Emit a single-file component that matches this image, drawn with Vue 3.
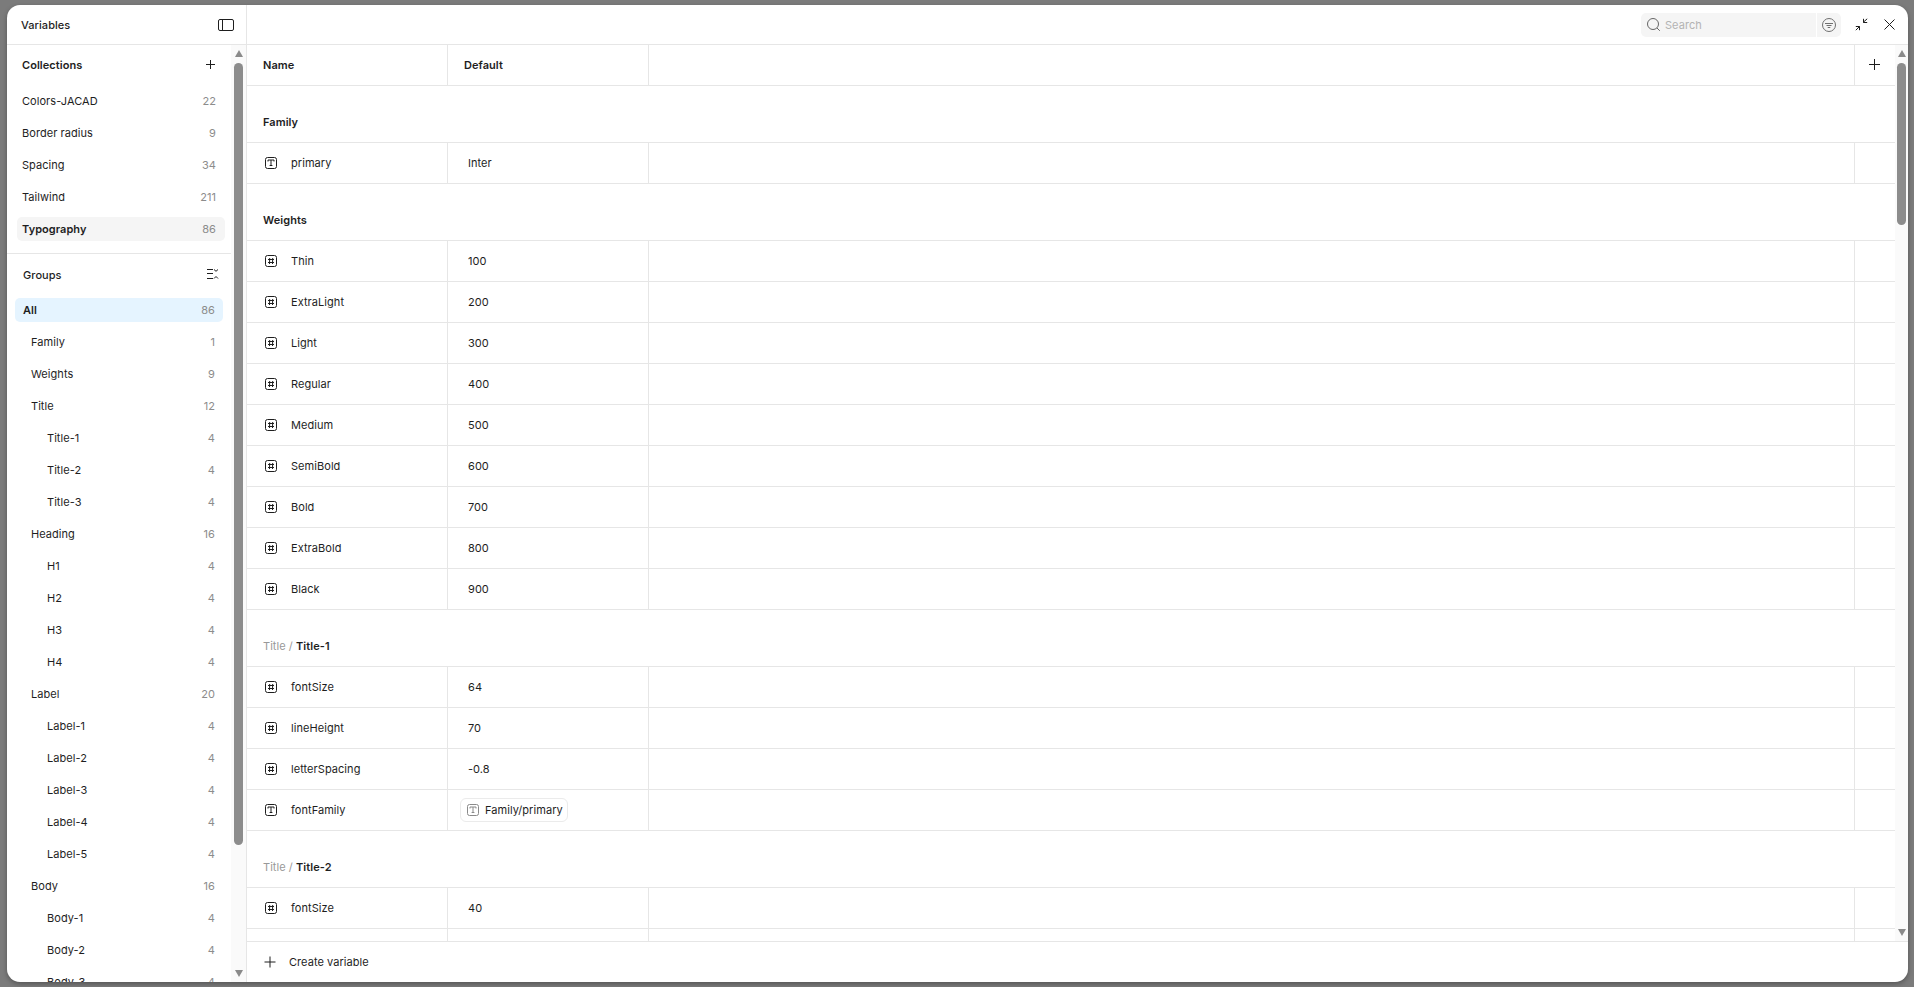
<script setup>
const collections = [
  { name: 'Colors-JACAD', count: 22 },
  { name: 'Border radius', count: 9 },
  { name: 'Spacing', count: 34 },
  { name: 'Tailwind', count: 211 },
  { name: 'Typography', count: 86, active: true },
]
const groups = [
  ['Family', 1, 1], ['Weights', 9, 1], ['Title', 12, 1],
  ['Title-1', 4, 2], ['Title-2', 4, 2], ['Title-3', 4, 2],
  ['Heading', 16, 1], ['H1', 4, 2], ['H2', 4, 2], ['H3', 4, 2], ['H4', 4, 2],
  ['Label', 20, 1], ['Label-1', 4, 2], ['Label-2', 4, 2], ['Label-3', 4, 2], ['Label-4', 4, 2], ['Label-5', 4, 2],
  ['Body', 16, 1], ['Body-1', 4, 2], ['Body-2', 4, 2], ['Body-3', 4, 2],
].map(([name, count, level]) => ({ name, count, level }))
const sections = [
  { title: 'Family', rows: [{ t: 'T', name: 'primary', value: 'Inter' }] },
  {
    title: 'Weights',
    rows: [['Thin', 100], ['ExtraLight', 200], ['Light', 300], ['Regular', 400], ['Medium', 500], ['SemiBold', 600], ['Bold', 700], ['ExtraBold', 800], ['Black', 900]]
      .map(([name, value]) => ({ t: '#', name, value })),
  },
  {
    parent: 'Title', title: 'Title-1',
    rows: [
      { t: '#', name: 'fontSize', value: '64' },
      { t: '#', name: 'lineHeight', value: '70' },
      { t: '#', name: 'letterSpacing', value: '-0.8' },
      { t: 'T', name: 'fontFamily', alias: 'Family/primary' },
    ],
  },
  {
    parent: 'Title', title: 'Title-2',
    rows: [
      { t: '#', name: 'fontSize', value: '40' },
      { t: '#', name: 'lineHeight', value: '48' },
    ],
  },
]
</script>

<template>
  <div class="page">
    <div class="modal">
      <aside class="side">
        <header class="side-head">
          <span class="title">Variables</span>
          <svg class="ic" width="16" height="12" viewBox="0 0 16 12" fill="none" stroke="#1e1e1e">
            <rect x="0.5" y="0.5" width="15" height="11" rx="1.5" />
            <path d="M4.5 0.5v11" />
          </svg>
        </header>
        <div class="side-body">
          <div class="side-scroll">
            <div class="coll-head">
              <span class="strong">Collections</span>
              <svg width="12" height="12" viewBox="0 0 12 12" fill="none" stroke="#1e1e1e"><path d="M6.5 1v9M2 5.5h9" /></svg>
            </div>
            <ul class="coll-list">
              <li v-for="c in collections" :key="c.name" class="coll" :class="{ active: c.active }">
                <span>{{ c.name }}</span><span class="count">{{ c.count }}</span>
              </li>
            </ul>
            <div class="groups-head">
              <span class="medium">Groups</span>
              <svg width="12" height="11" viewBox="0 0 12 11" fill="none" stroke="#1e1e1e">
                <path d="M0 0.5h6M0 4.5h6M0 9.5h6M7 0.5l2 1.8 2-1.8M7 9.5l2-2 2 2" />
              </svg>
            </div>
            <ul class="group-list">
              <li class="group all"><span>All</span><span class="count">86</span></li>
              <li v-for="g in groups" :key="g.name" class="group" :class="'lv' + g.level">
                <span>{{ g.name }}</span><span class="count">{{ g.count }}</span>
              </li>
            </ul>
          </div>
          <div class="bar bar-side">
            <i class="arrow up"></i>
            <i class="thumb thumb-side"></i>
            <i class="arrow down"></i>
          </div>
        </div>
      </aside>

      <main class="main">
        <header class="top">
          <div class="search">
            <div class="search-input">
              <svg width="14" height="14" viewBox="0 0 14 14" fill="none" stroke="#666"><circle cx="6" cy="6" r="5.5" /><path d="M10 10L12.8 12.8" /></svg>
              <span>Search</span>
            </div>
            <div class="search-filter">
              <svg width="14" height="14" viewBox="0 0 14 14" fill="none" stroke="#707070"><circle cx="7" cy="7" r="6.5" /><path d="M3 5.5h8M4.5 7.5h5M5.7 9.5h2.6" /></svg>
            </div>
          </div>
          <button class="icon-btn">
            <svg width="13" height="13" viewBox="0 0 13 13" fill="none" stroke="#1e1e1e"><path d="M12.2 0.8L8 4.5M8.5 0.8v3.7h3.7M0.8 12.2L4.5 8.5M0.8 8.5h3.7v3.7" /></svg>
          </button>
          <button class="icon-btn close">
            <svg width="11" height="11" viewBox="0 0 11 11" fill="none" stroke="#1e1e1e"><path d="M0.5 0.5l10 10M10.5 0.5l-10 10" /></svg>
          </button>
        </header>

        <div class="table-wrap">
          <div class="table">
            <div class="row head">
              <div class="cell name-h">Name</div>
              <div class="cell def-h">Default</div>
              <div class="cell"></div>
              <div class="cell add">
                <svg width="12" height="12" viewBox="0 0 12 12" fill="none" stroke="#1e1e1e"><path d="M5.5 0v11M0 5.5h11" /></svg>
              </div>
            </div>
            <section v-for="s in sections" :key="s.title">
              <div class="sec-title">
                <span v-if="s.parent" class="crumb">{{ s.parent }} / </span><b>{{ s.title }}</b>
              </div>
              <div v-for="r in s.rows" :key="r.name" class="row">
                <div class="cell name">
                  <svg class="type" width="12" height="12" viewBox="0 0 12 12" fill="none" stroke="#1e1e1e">
                    <rect x="0.5" y="0.5" width="11" height="11" rx="2" />
                    <path v-if="r.t === 'T'" d="M3 4.5V3h6v1.5M6 3v6M4.6 8.5h2.8" />
                    <path v-else d="M4.7 3l-.2 6M7.7 3l-.2 6M3 4.5h6M3 7.5h6" />
                  </svg>
                  <span>{{ r.name }}</span>
                </div>
                <div class="cell val">
                  <span v-if="r.alias" class="pill">
                    <svg width="12" height="12" viewBox="0 0 12 12" fill="none" stroke="#8a8a8a">
                      <rect x="0.5" y="0.5" width="11" height="11" rx="2" />
                      <path d="M3 4.5V3h6v1.5M6 3v6M4.6 8.5h2.8" />
                    </svg>
                    {{ r.alias }}
                  </span>
                  <template v-else>{{ r.value }}</template>
                </div>
                <div class="cell"></div>
                <div class="cell"></div>
              </div>
            </section>
          </div>
          <div class="bar bar-main">
            <i class="arrow up"></i>
            <i class="thumb thumb-main"></i>
            <i class="arrow down"></i>
          </div>
        </div>

        <footer class="foot">
          <svg width="12" height="12" viewBox="0 0 12 12" fill="none" stroke="#1e1e1e"><path d="M6 0.5v11M0.5 6h11" /></svg>
          <span>Create variable</span>
        </footer>
      </main>
    </div>
  </div>
</template>

<style>
html, body { margin: 0; background: #7b7b7b; overflow: hidden; }
</style>

<style scoped>
.page {
  width: 1914px;
  height: 987px;
  box-sizing: border-box;
  padding: 5px 6px 5px 7px;
  overflow: hidden;
  font-family: Inter, "Liberation Sans", sans-serif;
  font-size: 11px;
  font-weight: 400;
  letter-spacing: 0.055px;
  color: #1e1e1e;
}
.modal {
  display: flex;
  height: 100%;
  background: #fff;
  border-radius: 13px;
  overflow: hidden;
  box-shadow: 0 2px 5px rgba(0, 0, 0, .3);
}
ul { list-style: none; margin: 0; padding: 0; }

/* sidebar */
.side {
  width: 240px;
  flex: none;
  box-sizing: border-box;
  border-right: 1px solid #e6e6e6;
  display: flex;
  flex-direction: column;
  min-height: 0;
}
.side-head {
  height: 40px;
  flex: none;
  box-sizing: border-box;
  border-bottom: 1px solid #e6e6e6;
  display: flex;
  align-items: center;
  justify-content: space-between;
  padding: 0 12px 0 14px;
}
.title { font-weight: 500; }
.side-body { flex: 1; display: flex; min-height: 0; }
.side-scroll { flex: 1; min-width: 0; overflow: hidden; }
.coll-head {
  height: 40px;
  display: flex;
  align-items: center;
  justify-content: space-between;
  padding: 0 15px;
}
.strong { font-weight: 600; }
.medium { font-weight: 450; }
.coll-list { padding: 0 6px 0 10px; }
.coll {
  height: 24px;
  margin-bottom: 8px;
  padding: 0 9px 0 5px;
  display: flex;
  align-items: center;
  justify-content: space-between;
  border-radius: 5px;
}
.coll:first-child { margin-top: 4px; }
.coll.active { background: #f5f5f5; font-weight: 600; margin-bottom: 0; }
.count { color: #8c8c8c; font-weight: 400; }
.groups-head {
  margin-top: 12px;
  border-top: 1px solid #e6e6e6;
  height: 41px;
  box-sizing: content-box;
  display: flex;
  align-items: center;
  justify-content: space-between;
  padding: 0 12px 0 16px;
}
.group-list { padding: 3px 8px 0 8px; }
.group {
  height: 24px;
  margin-bottom: 8px;
  display: flex;
  align-items: center;
  justify-content: space-between;
  padding: 0 8px;
  border-radius: 5px;
}
.group.all { background: #e5f4ff; font-weight: 600; }
.group.lv1 { padding-left: 16px; }
.group.lv2 { padding-left: 32px; }

/* scrollbars */
.bar {
  flex: none;
  background: #fafafa;
  display: flex;
  flex-direction: column;
  align-items: center;
  box-sizing: border-box;
  padding: 5px 0;
}
.bar-side { width: 15px; }
.bar-main { width: 13px; }
.arrow { width: 0; height: 0; border-left: 4.5px solid transparent; border-right: 4.5px solid transparent; }
.arrow.up { border-bottom: 7px solid #8a8a8a; }
.arrow.down { border-top: 7px solid #8a8a8a; margin-top: auto; }
.thumb { width: 9px; margin-top: 6px; background: #8c8c8c; border-radius: 5px; }
.thumb-side { height: 782px; }
.thumb-main { height: 162px; }

/* main */
.main { flex: 1; min-width: 0; display: flex; flex-direction: column; }
.top {
  height: 40px;
  flex: none;
  box-sizing: border-box;
  border-bottom: 1px solid #e6e6e6;
  display: flex;
  align-items: center;
  justify-content: flex-end;
  padding-right: 12px;
}
.search {
  width: 200px;
  height: 24px;
  margin-right: 13px;
  display: flex;
  gap: 1px;
  border-radius: 5px;
  overflow: hidden;
}
.search-input {
  flex: 1;
  background: #f5f5f5;
  display: flex;
  align-items: center;
  gap: 4px;
  padding-left: 6px;
  color: #b3b3b3;
}
.search-filter {
  width: 24px;
  background: #f5f5f5;
  display: flex;
  align-items: center;
  justify-content: center;
}
.icon-btn {
  border: 0;
  padding: 0;
  background: none;
  width: 14px;
  height: 14px;
  display: flex;
  align-items: center;
  justify-content: center;
}
.icon-btn.close { margin-left: 14px; }

.table-wrap { flex: 1; display: flex; min-height: 0; border-bottom: 1px solid #e6e6e6; }
.table { flex: 1; min-width: 0; overflow: hidden; }
.row {
  display: grid;
  grid-template-columns: 201px 201px 1fr 40px;
  height: 41px;
  box-sizing: border-box;
  border-bottom: 1px solid #e6e6e6;
}
.cell {
  border-right: 1px solid #e6e6e6;
  display: flex;
  align-items: center;
  min-width: 0;
}
.cell:last-child { border-right: 0; }
.head { font-weight: 600; }
.name-h { padding-left: 16px; }
.def-h { padding-left: 16px; }
.add { justify-content: center; }
.sec-title {
  height: 57px;
  box-sizing: border-box;
  border-bottom: 1px solid #e6e6e6;
  padding: 29px 0 0 16px;
  line-height: 14px;
}
.sec-title b { font-weight: 600; }
.crumb { color: #999; }
.name { padding-left: 18px; gap: 14px; }
.type { flex: none; }
.val { padding-left: 20px; }
.pill {
  height: 22px;
  margin-left: -8px;
  padding: 0 4px 0 6px;
  display: flex;
  align-items: center;
  gap: 6px;
  border: 1px solid #ebebeb;
  border-radius: 6px;
}
.foot {
  height: 40px;
  flex: none;
  display: flex;
  align-items: center;
  gap: 13px;
  padding-left: 17px;
}
</style>
